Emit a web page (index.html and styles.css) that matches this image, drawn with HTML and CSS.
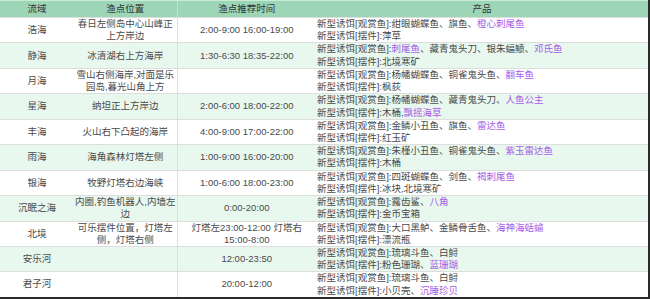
FILE: index.html
```html
<!DOCTYPE html>
<html lang="zh">
<head>
<meta charset="utf-8">
<link rel="stylesheet" href="styles.css">
</head>
<body>
<div class="frame">
<table class="fish">
  <colgroup>
    <col class="c1"><col class="c2"><col class="c3"><col class="c4">
  </colgroup>
  <thead>
    <tr><th>流域</th><th>渔点位置</th><th class="sep">渔点推荐时间</th><th>产品</th></tr>
  </thead>
  <tbody>
    <tr><td>浩海</td><td class="loc">春日左侧岛中心山峰正上方岸边</td><td class="sep">2:00-9:00 16:00-19:00</td><td class="prod">新型诱饵[观赏鱼]:绀眼蝴蝶鱼、旗鱼、<span class="hl">橙心刺尾鱼</span><br>新型诱饵[摆件]:萍草</td></tr>
    <tr><td>静海</td><td class="loc">冰清湖右上方海岸</td><td class="sep">1:30-6:30 18:35-22:00</td><td class="prod">新型诱饵[观赏鱼]:<span class="hl">刺尾鱼</span>、藏青鬼头刀、银朱蝠鲼、<span class="hl">邓氏鱼</span><br>新型诱饵[摆件]:北境寒矿</td></tr>
    <tr><td>月海</td><td class="loc">雪山右侧海岸,对面是乐园岛,暮光山角上方</td><td class="sep"></td><td class="prod">新型诱饵[观赏鱼]:杨幡蝴蝶鱼、铜雀鬼头鱼、<span class="hl">翻车鱼</span><br>新型诱饵[摆件]:枫荻</td></tr>
    <tr><td>星海</td><td class="loc">纳坦正上方岸边</td><td class="sep">2:00-6:00 18:00-22:00</td><td class="prod">新型诱饵[观赏鱼]:杨幡蝴蝶鱼、藏青鬼头刀、<span class="hl">人鱼公主</span><br>新型诱饵[摆件]:木桶,<span class="hl">飘摇海草</span></td></tr>
    <tr><td>丰海</td><td class="loc">火山右下凸起的海岸</td><td class="sep">4:00-9:00 17:00-22:00</td><td class="prod">新型诱饵[观赏鱼]:金鳞小丑鱼、旗鱼、<span class="hl">雷达鱼</span><br>新型诱饵[摆件]:红玉矿</td></tr>
    <tr><td>雨海</td><td class="loc">海角森林灯塔左侧</td><td class="sep">1:00-9:00 16:00-20:00</td><td class="prod">新型诱饵[观赏鱼]:朱槿小丑鱼、铜雀鬼头鱼、<span class="hl">紫玉雷达鱼</span><br>新型诱饵[摆件]:木桶</td></tr>
    <tr><td>银海</td><td class="loc">牧野灯塔右边海峡</td><td class="sep">1:00-6:00 18:00-23:00</td><td class="prod">新型诱饵[观赏鱼]:四斑蝴蝶鱼、剑鱼、<span class="hl">褐刺尾鱼</span><br>新型诱饵[摆件]:冰块,北境寒矿</td></tr>
    <tr><td>沉眠之海</td><td class="loc">内圈,钓鱼机器人,内墙左边</td><td class="sep">0:00-20:00</td><td class="prod">新型诱饵[观赏鱼]:露齿鲨、<span class="hl">八角</span><br>新型诱饵[摆件]:金币宝箱</td></tr>
    <tr><td>北境</td><td class="loc">可乐摆件位置，灯塔左侧，灯塔右侧</td><td class="sep">灯塔左23:00-12:00 灯塔右15:00-8:00</td><td class="prod">新型诱饵[观赏鱼]:大口黑鲈、金鳞骨舌鱼、<span class="hl">海神海蛞蝓</span><br>新型诱饵[摆件]:漂流瓶</td></tr>
    <tr><td>安乐河</td><td class="loc"></td><td class="sep">12:00-23:50</td><td class="prod">新型诱饵[观赏鱼]:琉璃斗鱼、白鲟<br>新型诱饵[摆件]:粉色珊瑚、<span class="hl">蓝珊瑚</span></td></tr>
    <tr><td>君子河</td><td class="loc"></td><td class="sep">20:00-12:00</td><td class="prod">新型诱饵[观赏鱼]:琉璃斗鱼、白鲟<br>新型诱饵[摆件]:小贝壳、<span class="hl">沉睡珍贝</span></td></tr>
  </tbody>
</table>
</div>
</body>
</html>
```

FILE: styles.css
```css
html, body {
  margin: 0;
  padding: 0;
  background: #ffffff;
}
.frame {
  width: 648px;
  height: 297px;
  border-right: 2px solid #2a2a2a;
  border-bottom: 2px solid #2a2a2a;
  overflow: hidden;
}
.fish {
  width: 648px;
  border-collapse: collapse;
  table-layout: fixed;
  font-family: "Liberation Sans", "Noto Sans CJK SC", sans-serif;
  font-size: 9.5px;
  color: #4a4a4a;
}
.c1 { width: 74px; }
.c2 { width: 103px; }
.c3 { width: 139px; }
.c4 { width: 332px; }
.fish th {
  background: #9dd6b7;
  color: #333333;
  font-weight: normal;
  height: 16px;
  padding: 0;
  line-height: 16px;
  border-top: 1px solid #c9ebd8;
  text-align: center;
}
.fish th.sep { border-left: 1px solid #bfe3cf; }
.fish td {
  padding: 0 3px;
  height: 24.45px;
  line-height: 12.2px;
  text-align: center;
  vertical-align: middle;
  border-top: 1px solid #dddddd;
}
.fish td.loc { padding: 0 1px; }
.fish td.sep { border-left: 1px solid #dddddd; }
.fish td.prod {
  text-align: left;
  padding: 0 0 0 1px;
}
.fish tbody tr:nth-child(even) td { background: #e9f8ef; }
.hl { color: #a65ce6; }
```
